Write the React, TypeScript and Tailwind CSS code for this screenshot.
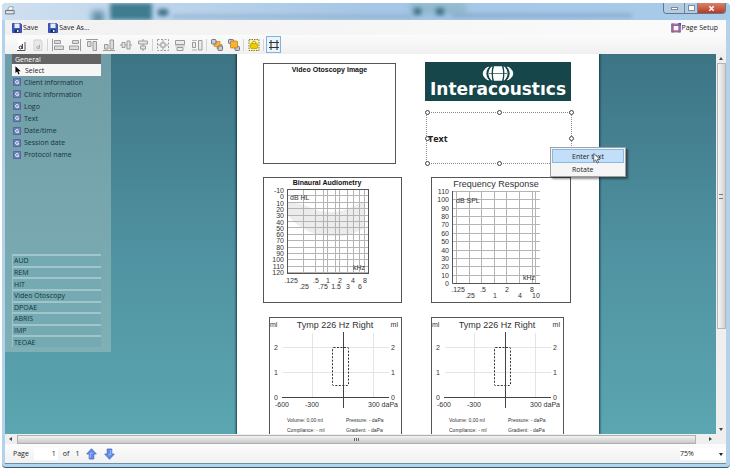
import { useState } from "react";
import type { ReactNode } from "react";

const uiFont = "font-['Open_Sans','Noto_Sans',sans-serif]";

const generalItems = [
  "Client information",
  "Clinic information",
  "Logo",
  "Text",
  "Date/time",
  "Session date",
  "Protocol name",
];

const modules = ["AUD", "REM", "HIT", "Video Otoscopy", "DPOAE", "ABRIS", "IMP", "TEOAE"];

function DiskIcon() {
  return (
    <svg viewBox="0 0 10 10" className="size-[10px] shrink-0">
      <path d="M0.5 0.5h8l1 1v8h-9z" fill="#3c5bc0" stroke="#3a4fa8" />
      <rect x="2.5" y="0.5" width="5" height="4.5" fill="#e8eefc" />
      <rect x="2.5" y="6.5" width="5" height="3" fill="#1d2b66" />
      <rect x="5" y="7" width="1.5" height="2" fill="#e8eefc" />
    </svg>
  );
}

function PageSetupIcon() {
  return (
    <svg viewBox="0 0 10 10" className="size-[10px] shrink-0">
      <rect x="0" y="0.5" width="10" height="9" fill="#7d86c8" />
      <rect x="2.5" y="3" width="5" height="4.5" fill="#fff" />
      <path d="M2 0v10M8 0v10M0 2.5h10M0 8h10" stroke="#c4476a" strokeWidth="0.8" />
      <path d="M7 0h3v3z" fill="#2f54d8" />
    </svg>
  );
}

function ToolButton({
  label,
  active,
  disabled,
  children,
}: {
  label: string;
  active?: boolean;
  disabled?: boolean;
  children: ReactNode;
}) {
  return (
    <button
      type="button"
      aria-label={label}
      disabled={disabled}
      className={
        active
          ? "ml-px flex h-[17px] w-[15px] items-center justify-center border border-[#7fb2dc] bg-[#eaf4fc]"
          : "flex h-[17px] w-[17px] items-center justify-center"
      }
    >
      <svg viewBox="0 0 14 14" fill="none" className="size-[14px] shrink-0">
        {children}
      </svg>
    </button>
  );
}

function Separator() {
  return <span className="mx-px h-3 w-px shrink-0 bg-[#d3d3d3]" />;
}

function Toolbar() {
  const g = "#9b9b9b";
  return (
    <div className="flex h-[19px] shrink-0 items-center bg-gradient-to-b from-[#fbfbfb] to-[#f0f0f0] pl-[7px]">
      <ToolButton label="Portrait">
        <path d="M3 1h6l2 2v9H3z" fill="#fff" />
        <path d="M11 4v8.5H3" stroke="#555" />
        <circle cx="6.5" cy="9.5" r="1.4" stroke="#222" />
        <path d="M8.3 6v5" stroke="#222" />
      </ToolButton>
      <ToolButton label="Landscape" disabled>
        <path d="M3 2h7l1 2v8.5H3z" fill="#e9e9e9" stroke="#d2d2d2" />
        <circle cx="6.8" cy="9.5" r="1.2" stroke="#aaa" />
        <path d="M8.4 6.5v4.3" stroke="#aaa" />
      </ToolButton>
      <Separator />
      <ToolButton label="Align left" disabled>
        <path d="M1.5 1v12" stroke={g} />
        <path d="M3.5 2.5h6v3h-6zM3.5 8h9v3.500h-9z" stroke={g} fill="#dcdcdc" />
      </ToolButton>
      <ToolButton label="Align right" disabled>
        <path d="M12.5 1v12" stroke={g} />
        <path d="M4.5 2.5h6v3h-6zM1.5 8h9v3.500h-9z" stroke={g} fill="#dcdcdc" />
      </ToolButton>
      <ToolButton label="Align top" disabled>
        <path d="M1 1.5h12" stroke={g} />
        <path d="M2.5 3.5h3.500v5H2.500zM8 3.5h3.500v9H8z" stroke={g} fill="#dcdcdc" />
      </ToolButton>
      <ToolButton label="Align bottom" disabled>
        <path d="M1 12.5h12" stroke={g} />
        <path d="M2.5 6.5h3.500v4.500H2.500zM8 2h3.500v9H8z" stroke={g} fill="#dcdcdc" />
      </ToolButton>
      <ToolButton label="Align middle" disabled>
        <path d="M1 7h12" stroke={g} />
        <path d="M3 4.5h3v5H3zM8 3h3v8H8z" stroke={g} fill="#e6e6e6" />
      </ToolButton>
      <ToolButton label="Align centre" disabled>
        <path d="M7 1v12" stroke={g} />
        <path d="M2.5 3h9v3h-9zM4.5 8h5v3h-5z" stroke={g} fill="#e6e6e6" />
      </ToolButton>
      <Separator />
      <ToolButton label="Same size" disabled>
        <rect x="1.5" y="1.5" width="11" height="11" stroke={g} strokeDasharray="2 1.5" />
        <rect x="5" y="5" width="4" height="4" stroke={g} />
        <path d="M7 2v3M7 9v3M2 7h3M9 7h3" stroke={g} />
      </ToolButton>
      <ToolButton label="Same width" disabled>
        <path d="M2.5 2.5h9v4h-9zM4 9.5h6v3h-6z" stroke={g} fill="#ececec" />
        <path d="M2 8h10" stroke={g} strokeWidth="0.7" />
      </ToolButton>
      <ToolButton label="Same height" disabled>
        <path d="M8.5 2.5h3.5v9.5H8.5zM2.5 4.5h3v5h-3z" stroke={g} fill="#ececec" />
        <path d="M2 2.5h5M2 12h5" stroke={g} strokeWidth="0.7" />
      </ToolButton>
      <Separator />
      <ToolButton label="Bring to front">
        <path d="M4 3.500h6v3h2v4H7v-2H4z" fill="#f5b437" stroke="#c07a18" strokeWidth="0.6" />
        <rect x="1.5" y="1.5" width="4.500" height="4.500" rx="0.800" fill="#c4ccd6" stroke="#56606c" strokeWidth="0.8" />
        <rect x="8" y="8" width="4.5" height="4.5" rx="0.800" fill="#c4ccd6" stroke="#56606c" strokeWidth="0.8" />
      </ToolButton>
      <ToolButton label="Send to back">
        <rect x="1.5" y="1.5" width="5" height="4" rx="0.800" fill="#c4ccd6" stroke="#56606c" strokeWidth="0.8" />
        <rect x="8" y="8.5" width="4.5" height="4" rx="0.800" fill="#c4ccd6" stroke="#56606c" strokeWidth="0.8" />
        <rect x="3.5" y="3" width="7" height="7" rx="0.800" fill="#f9b233" stroke="#b9731a" strokeWidth="0.7" />
      </ToolButton>
      <Separator />
      <ToolButton label="Lock">
        <rect x="2" y="1.5" width="10" height="11" fill="#fdf6a0" stroke="#77775a" strokeDasharray="1.5 1" />
        <rect x="3.500" y="5.500" width="7" height="5" rx="1" fill="#f0cb00" stroke="#a88800" strokeWidth="0.6" />
        <path d="M5.3 5.500V4.500c0-1.800 3.400-1.800 3.400 0V5.500" stroke="#b89500" />
      </ToolButton>
      <Separator />
      <ToolButton label="Snap to grid" active>
        <path d="M4 2v10M10 2v10M2 4.5h10M2 9.5h10" stroke="#333" strokeWidth="1.1" />
      </ToolButton>
    </div>
  );
}

function TitleBar() {
  return (
    <div className="relative flex h-[17px] shrink-0 items-start overflow-hidden bg-gradient-to-r from-[#cfe0ef] via-[#a5c6e6] to-[#a9cbea]">
      <div className="absolute top-0 left-[108px] h-[17px] w-[42px] bg-[#3f7c90] blur-[2px]" />
      <div className="absolute top-2 left-[90px] h-3 w-3 bg-[#5f8fa6] blur-[3px]" />
      <div className="absolute top-[6px] left-[156px] h-[7px] w-[10px] bg-[#3f7088] blur-[2px]" />
      <div className="absolute top-[12px] left-[170px] h-[3px] w-[240px] bg-[#8fb0cb] blur-[2px]" />
      <div className="absolute top-0 left-[408px] h-3 w-14 bg-[#8fb8cd] blur-[3px]" />
      <div className="absolute top-[5px] left-[412px] h-[7px] w-[7px] bg-[#3f7088] blur-[2px]" />
      <div className="absolute top-[5px] left-[434px] h-[7px] w-[8px] bg-[#3f7088] blur-[2px]" />
      <div className="absolute top-[11px] left-[450px] h-[3px] w-[180px] bg-[#7fa4c4] blur-[2px]" />
      <svg viewBox="0 0 12 10" className="relative mt-[3px] ml-[3px] h-[10px] w-[10px]">
        <path d="M3 4l2-4h5l-1 4z" fill="#fff" stroke="#556" strokeWidth="0.6" />
        <path d="M0.5 4.5h10.5v4h-10.5z" fill="#dfe6ee" stroke="#39434f" strokeWidth="0.8" />
      </svg>
      <div className="relative mr-1 ml-auto flex h-[11px] overflow-hidden rounded-b-sm border border-t-0 border-[#60788f] text-white">
        <button type="button" aria-label="Minimize" className="flex w-[21px] items-center justify-center border-r border-[#6f879c] bg-[#b5cce0]">
          <span className="h-[3px] w-[7px] border border-[#7c8b9a] bg-white" />
        </button>
        <button type="button" aria-label="Maximize" className="flex w-[13px] items-center justify-center border-r border-[#6f879c] bg-[#b5cce0]">
          <span className="h-[6px] w-[7px] border border-[#7c8b9a] bg-white" />
        </button>
        <button type="button" aria-label="Close" className="flex w-[27px] items-center justify-center bg-gradient-to-b from-[#d9826c] to-[#b8371c]">
          <svg viewBox="0 0 8 8" className="size-[7px]">
            <path d="M1.5 1.5l5 5M6.5 1.5l-5 5" stroke="#fff" strokeWidth="1.8" />
          </svg>
        </button>
      </div>
    </div>
  );
}

function Sidebar() {
  return (
    <aside className="flex h-[298px] w-[106px] shrink-0 flex-col bg-gradient-to-b from-[#6f9ca5] to-[#7fb0b6] pr-[10px] pl-[7px] text-[7px] leading-none text-[#12343b]">
      <button type="button" className="h-[10px] shrink-0 bg-[#646464] pl-[3px] text-left text-white">
        General
      </button>
      <button type="button" className="flex h-3 shrink-0 items-center bg-[#f6f6f6] pl-[3px] text-[#222]">
        <svg viewBox="0 0 7 10" className="h-[9px] w-[6px]">
          <path d="M0.5 0v8l2-1.8L4 9.6l1.3-.6-1.4-3.2h2.8z" fill="#000" />
        </svg>
        <span className="ml-1">Select</span>
      </button>
      <ul className="flex h-[85px] shrink-0 flex-col">
        {generalItems.map((item) => (
          <li key={item} className="flex flex-1">
            <button type="button" className="flex w-full items-center gap-[3px] pl-px">
              <svg viewBox="0 0 8 8" className="size-[8px] shrink-0">
                <rect width="8" height="8" rx="0.8" fill="#5468a0" />
                <rect x="1" y="1" width="6" height="6" fill="#6f82b8" />
                <path d="M5.5 3C4.6 2 2.6 2.3 2.6 4s2 2.200 2.900 1.300V4.200H4.300" fill="none" stroke="#fff" strokeWidth="0.9" />
              </svg>
              {item}
            </button>
          </li>
        ))}
      </ul>
      <ul className="mt-auto mb-[5px] flex h-[93px] shrink-0 flex-col">
        {modules.map((name) => (
          <li key={name} className="flex flex-1">
            <button
              type="button"
              className="w-full border-t-2 border-l border-t-[#a0c5ca] border-l-[#9cc3c9] bg-[#76aab2] pl-px text-left"
            >
              {name}
            </button>
          </li>
        ))}
      </ul>
    </aside>
  );
}

function Logo() {
  return (
    <div className="flex h-[39px] flex-col items-center bg-[#17464a] pt-[3px] text-white">
      <svg viewBox="0 0 32 17" className="h-[17px] w-[32px] shrink-0">
        <path d="M6.500 2C-0.500 5-0.500 12 6.500 15C3 11 3 6 6.500 2z" fill="#fff" stroke="#fff" strokeWidth="1" />
        <path d="M25.500 2C32.500 5 32.500 12 25.500 15C29 11 29 6 25.500 2z" fill="#fff" stroke="#fff" strokeWidth="1" />
        <path d="M9.800 1.800C6 6 6 11 9.800 15.200C8.800 11 8.800 6 9.800 1.800z" fill="#fff" stroke="#fff" strokeWidth="1" />
        <path d="M22.200 1.800C26 6 26 11 22.200 15.200C23.200 11 23.200 6 22.200 1.800z" fill="#fff" stroke="#fff" strokeWidth="1" />
        <path d="M12 1.200h8C21.500 6 21.500 11 20 15.800h-8C10.500 11 10.500 6 12 1.200z" fill="#fff" />
        <path d="M7 8.500h18" stroke="#17464a" strokeWidth="0.700" fill="none" />
      </svg>
      <span className="-mt-[3px] font-['DejaVu_Sans',sans-serif] text-[17px] leading-[20px] font-bold whitespace-nowrap">
        Interacoustıcs
      </span>
    </div>
  );
}

const handles = [
  "-top-[3px] -left-[2px]",
  "-top-[3px] left-[70px]",
  "-top-[3px] -right-[3px]",
  "top-[23px] -left-[2px]",
  "top-[23px] -right-[3px]",
  "-bottom-[3px] -left-[2px]",
  "-bottom-[3px] left-[70px]",
];

function SelectedText() {
  return (
    <div className="relative mt-[11px] ml-px flex h-[52px] w-[146px] items-center border border-dotted border-[#8a8a8a]">
      {handles.map((pos) => (
        <span key={pos} className={`absolute size-[5px] rounded-full border border-[#444] bg-white ${pos}`} />
      ))}
      <span className="relative pl-px text-[9px] leading-none font-bold text-[#222]">Text</span>
      <div
        role="menu"
        className="absolute top-[34px] left-[123px] z-10 flex w-[76px] flex-col border border-[#a0a0a0] bg-[#f5f5f5] p-px text-[7px] leading-none text-[#222] shadow-[2px_2px_2px_rgba(0,0,0,0.45)]"
      >
        <button type="button" role="menuitem" className="h-[14px] border border-[#86b9e6] bg-[#c2def8] pl-[19px] text-left">
          Enter text
        </button>
        <button type="button" role="menuitem" className="h-3 pl-5 text-left">
          Rotate
        </button>
        <svg viewBox="0 0 8 12" className="absolute top-[5px] left-[42px] h-[11px] w-[8px]">
          <path d="M0.5 0.5v9l2.200-2 1.500 3.500 1.500-.7-1.500-3.300h3z" fill="#fff" stroke="#222" strokeWidth="0.7" />
        </svg>
      </div>
    </div>
  );
}

const audX = [24, 40, 52, 60, 64, 72, 76, 84, 90, 96, 101, 105];
const audLabels = [
  [".125", 27, 0],
  [".25", 40, 1],
  [".5", 52, 0],
  [".75", 59, 1],
  ["1", 64, 0],
  ["1.5", 72, 1],
  ["2", 76, 0],
  ["3", 84, 1],
  ["4", 89, 0],
  ["6", 96, 1],
  ["8", 101, 0],
] as const;

const chartFont = "font-['Liberation_Sans',sans-serif] text-[7px]";

function AudiometryChart() {
  return (
    <svg viewBox="0 0 137 124" className={`block h-[124px] w-[137px] ${chartFont}`} fill="#333">
      <text x="63" y="7" textAnchor="middle" fill="#111" className="font-bold">
        Binaural Audiometry
      </text>
      <rect x="23" y="11" width="82" height="84" fill="#fff" />
      <path d="M23 25C35 24 44 29 52 32C62 35 74 35 84 31C90 28 95 25 101 24V50C90 56 80 59 68 58C48 58 34 50 23 36z" fill="#ececec" />
      {audX.map((x) => (
        <path key={x} d={`M${x - 0.5} 11v84`} stroke="#b4b4b4" />
      ))}
      {Array.from({ length: 14 }, (_, i) => (
        <path key={i} d={`M23 ${Math.round(12 + i * 6.4) - 0.5}h82`} stroke="#b4b4b4" />
      ))}
      <rect x="23.5" y="11.5" width="81" height="84" fill="none" stroke="#555" />
      {Array.from({ length: 14 }, (_, i) => (
        <text key={i} x="20" y={Math.round(15 + i * 6.3)} textAnchor="end">
          {i * 10 - 10}
        </text>
      ))}
      {audLabels.map(([t, x, row]) => (
        <text key={t} x={x} y={row ? 111 : 105} textAnchor="middle">
          {t}
        </text>
      ))}
      <text x="26" y="22">dB HL</text>
      <text x="101" y="92" textAnchor="end">kHz</text>
    </svg>
  );
}

const freqX = [25, 38, 50, 63, 75, 88, 101, 104];
const freqLabels = [
  [".125", 26, 0],
  [".25", 38, 1],
  [".5", 51, 0],
  ["1", 63, 1],
  ["2", 75, 0],
  ["4", 88, 1],
  ["8", 100, 0],
  ["10", 104, 1],
] as const;

function FrequencyChart() {
  return (
    <svg viewBox="0 0 138 124" className={`block h-[124px] w-[138px] ${chartFont}`} fill="#333">
      <text x="64" y="9" textAnchor="middle" className="text-[9px]">
        Frequency Response
      </text>
      {freqX.map((x) => (
        <path key={x} d={`M${x - 0.5} 13v92`} stroke="#b4b4b4" />
      ))}
      {Array.from({ length: 11 }, (_, i) => (
        <path key={i} d={`M20 ${Math.round(13 + i * 8.36) + 0.5}h88`} stroke="#b4b4b4" />
      ))}
      <path d="M20.5 13v92.500H108" fill="none" stroke="#555" />
      {Array.from({ length: 12 }, (_, i) => (
        <text key={i} x="17" y={Math.round(16 + i * 8.36)} textAnchor="end">
          {110 - i * 10}
        </text>
      ))}
      {freqLabels.map(([t, x, row]) => (
        <text key={t} x={x} y={row ? 120 : 114} textAnchor="middle">
          {t}
        </text>
      ))}
      <text x="24" y="25">dB SPL</text>
      <text x="103" y="102" textAnchor="end">kHz</text>
    </svg>
  );
}

function TympChart() {
  return (
    <svg viewBox="0 0 131 124" className={`block h-[124px] w-[131px] ${chartFont}`} fill="#333">
      <text x="65" y="10" textAnchor="middle" className="text-[9px]">
        Tymp 226 Hz Right
      </text>
      <text x="0" y="9">ml</text>
      <text x="128" y="9" textAnchor="end">ml</text>
      <path d="M13 29.5h106M13 54.5h106M42.5 15v64M103.5 15v64" stroke="#e4e4e4" />
      <path d="M12 79.5h107M73.5 14v76" stroke="#444" />
      <rect x="62.5" y="29.5" width="16" height="38" rx="1" fill="none" stroke="#333" strokeDasharray="2 1.5" />
      {["2", "1", "0"].map((t, i) => (
        <g key={t} textAnchor="middle">
          <text x="6" y={32 + i * 25}>{t}</text>
          <text x="123" y={32 + i * 25}>{t}</text>
        </g>
      ))}
      <text x="12" y="89" textAnchor="middle">-600</text>
      <text x="42" y="89" textAnchor="middle">-300</text>
      <text x="98" y="89">300 daPa</text>
      <g className="text-[5px]">
        <text x="17" y="104">Volume: 0,00 ml</text>
        <text x="76" y="104">Pressure: - daPa</text>
        <text x="17" y="114">Compliance: - ml</text>
        <text x="76" y="114">Gradient: - daPa</text>
      </g>
    </svg>
  );
}

function Sheet() {
  const frame = "border border-[#555] bg-white";
  return (
    <div className="flex h-full w-[362px] shrink-0 items-start bg-white pt-2 pl-[26px] shadow-[0_0_2px_1px_rgba(10,40,50,0.8)]">
      <div className="flex w-[139px] shrink-0 flex-col">
        <div className={`mt-px h-[101px] w-[133px] pt-[2px] text-center font-['Liberation_Sans',sans-serif] text-[7px] leading-[8px] font-bold text-[#111] ${frame}`}>
          Video Otoscopy Image
        </div>
        <div className={`mt-[13px] ${frame}`}>
          <AudiometryChart />
        </div>
        <div className={`mt-[14px] ml-[6px] ${frame}`}>
          <TympChart />
        </div>
      </div>
      <div className="ml-[23px] flex w-[146px] shrink-0 flex-col">
        <Logo />
        <SelectedText />
        <div className={`mt-[13px] ml-[6px] ${frame}`}>
          <FrequencyChart />
        </div>
        <div className={`mt-[14px] mr-[7px] ml-[6px] ${frame}`}>
          <TympChart />
        </div>
      </div>
    </div>
  );
}

function PageArrow({ label, down }: { label: string; down?: boolean }) {
  return (
    <button type="button" aria-label={label} className="ml-[7px]">
      <svg viewBox="0 0 11 12" className={down ? "h-3 w-[11px] rotate-180" : "h-3 w-[11px]"}>
        <path d="M5.5 0.7l4.800 5.300H7.800v5H3.200V6H0.700z" fill="#5f8bee" stroke="#4668b8" strokeWidth="0.8" />
        <path d="M4.300 10V5.200h2.400" stroke="#a9c6ff" strokeWidth="0.9" fill="none" />
      </svg>
    </button>
  );
}

function StatusBar() {
  const [page, setPage] = useState("1");
  return (
    <footer className="flex h-[19px] shrink-0 items-center bg-gradient-to-b from-[#fcfcfc] to-[#f1f1f1] pl-2 text-[7px] leading-none text-[#222]">
      <label htmlFor="page">Page</label>
      <input
        id="page"
        value={page}
        onChange={(e) => setPage(e.target.value)}
        className="ml-[5px] h-3 w-6 bg-white pr-[2px] text-right outline-none"
      />
      <span className="ml-[5px]">of</span>
      <span className="ml-[6px]">1</span>
      <PageArrow label="Previous page" />
      <PageArrow label="Next page" down />
      <div className="relative ml-auto h-3 w-[46px] bg-white">
        <select aria-label="Zoom" defaultValue="75%" className="h-full w-full appearance-none bg-transparent">
          <option>50%</option>
          <option>75%</option>
          <option>100%</option>
        </select>
        <svg viewBox="0 0 4 3" className="pointer-events-none absolute top-[5px] right-[3px] h-[3px] w-1">
          <path d="M0 0h4L2 3z" fill="#222" />
        </svg>
      </div>
    </footer>
  );
}

export default function App() {
  return (
    <div className={`h-screen bg-white pt-[3px] pr-[2px] pb-[2px] pl-[2px] ${uiFont}`}>
      <div className="flex h-full flex-col overflow-hidden rounded-sm border-b border-b-[#2f5e73] bg-[#b4d3ea]">
        <TitleBar />
        <div className="mr-1 mb-[3px] ml-[3px] flex min-h-0 flex-1 flex-col border-b border-[#6d8fa6]">
          <header className="flex h-[15px] shrink-0 items-center bg-gradient-to-r from-[#f1f1f1] to-[#fbfbfb] pr-[8px] pl-[7px] text-[7px] leading-none text-[#222]">
            <button type="button" className="flex items-center gap-px">
              <DiskIcon /> Save
            </button>
            <button type="button" className="ml-[10px] flex items-center gap-px">
              <DiskIcon /> Save As...
            </button>
            <button type="button" className="ml-auto flex items-center gap-px">
              <PageSetupIcon /> Page Setup
            </button>
          </header>
          <Toolbar />
          <main className="flex min-h-0 flex-1">
            <div className="flex min-w-0 flex-1 overflow-hidden bg-gradient-to-b from-[#3c7484] via-[#4f91a0] to-[#5ba6b0]">
              <Sidebar />
              <div className="flex min-w-0 flex-1 justify-center pl-[9px]">
                <Sheet />
              </div>
            </div>
            <div className="flex w-[10px] shrink-0 flex-col items-center justify-between bg-[#efefef] py-[3px]">
              <svg viewBox="0 0 4 3" className="h-[3px] w-1">
                <path d="M0 3h4L2 0z" fill="#444" />
              </svg>
              <div className="my-[3px] flex w-[9px] flex-1 flex-col items-center border border-[#b5b5b5] bg-gradient-to-r from-[#f6f6f6] to-[#d2d2d2]">
                <span className="my-auto h-[5px] w-1 border-y border-[#777]" />
              </div>
              <svg viewBox="0 0 4 3" className="mt-24 h-[3px] w-1">
                <path d="M0 0h4L2 3z" fill="#444" />
              </svg>
            </div>
          </main>
          <div className="flex h-[10px] shrink-0 items-center bg-[#efefef] pr-[14px] pl-[4px]">
            <svg viewBox="0 0 3 4" className="h-1 w-[3px]">
              <path d="M3 0v4L0 2z" fill="#444" />
            </svg>
            <div className="mx-[5px] flex h-[9px] flex-1 items-center justify-center border border-[#b0b0b0] bg-gradient-to-b from-[#f3f3f3] to-[#c9c9c9]">
              <span className="flex h-[3px] w-[5px] justify-between border-x border-[#666]">
                <span className="mx-auto w-px bg-[#666]" />
              </span>
            </div>
            <svg viewBox="0 0 3 4" className="ml-[8px] h-1 w-[3px]">
              <path d="M0 0v4L3 2z" fill="#444" />
            </svg>
          </div>
          <StatusBar />
        </div>
      </div>
    </div>
  );
}
